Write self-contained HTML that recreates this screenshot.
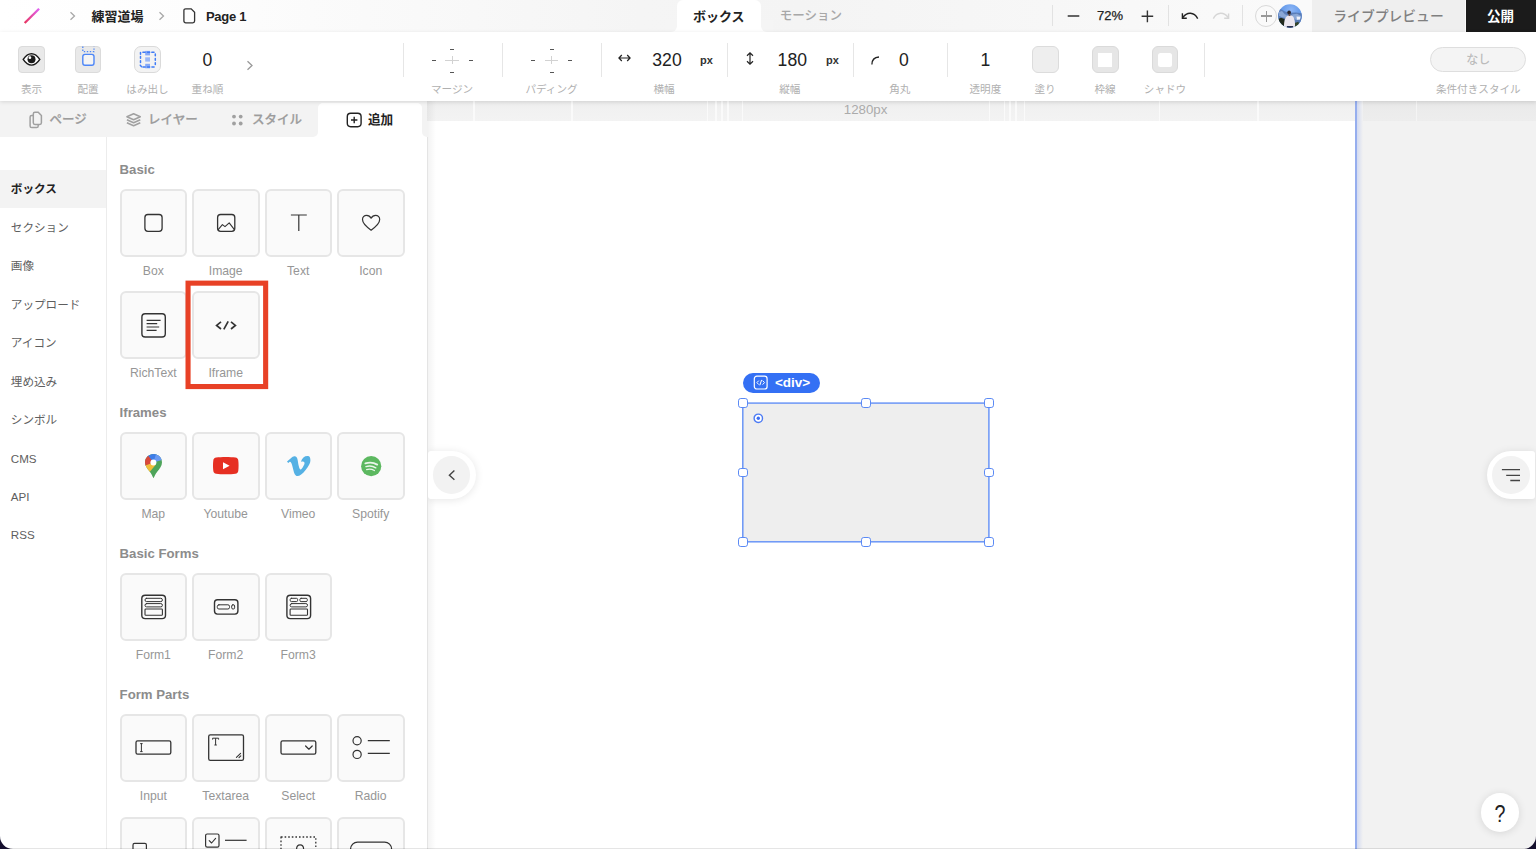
<!DOCTYPE html>
<html lang="ja">
<head>
<meta charset="utf-8">
<title>Editor</title>
<style>
*{box-sizing:border-box;margin:0;padding:0}
html,body{width:1536px;height:849px;overflow:hidden;background:#fff}
body{font-family:"Liberation Sans","Noto Sans CJK JP",sans-serif;color:#222;position:relative;font-size:13px}
.abs{position:absolute}
.t{position:absolute;white-space:nowrap;transform:translate(-50%,-50%);line-height:1}
.tl{position:absolute;white-space:nowrap;transform:translate(0,-50%);line-height:1}
svg{position:absolute;overflow:visible}
/* top bar */
#top{left:0;top:0;width:1536px;height:32px;background:linear-gradient(90deg,#fff 0,#fdfdfd 200px,#f5f5f5 640px,#f4f4f4 800px,#fafafa 1300px,#fafafa 100%)}
#tabbox{left:677px;top:0;width:84px;height:32px;background:#fff;border-radius:6px 6px 0 0}
.vsep{position:absolute;width:1px;background:#e2e2e2}
#live{left:1312px;top:0;width:153px;height:32px;background:#efefef}
#pub{left:1465.7px;top:0;width:70.3px;height:32px;background:#1b1b1b}
/* toolbar */
#tool{left:0;top:32px;width:1536px;height:69px;background:#fff;box-shadow:0 1px 4px rgba(0,0,0,.12);z-index:5}
.ib{position:absolute;width:26.6px;height:26.6px;top:14.2px;border-radius:4px;background:#e9e9e9;border:1px solid #dbdbdb}
.lab{position:absolute;white-space:nowrap;transform:translate(-50%,-50%);line-height:1;font-size:10.6px;color:#b0b0b0;top:56.5px}
.num{position:absolute;white-space:nowrap;transform:translate(-50%,-50%);line-height:1;font-size:17.6px;color:#222;top:28.6px}
.px{position:absolute;white-space:nowrap;transform:translate(-50%,-50%);line-height:1;font-size:11px;font-weight:bold;color:#333;top:28px}
.tsep{position:absolute;width:1px;background:#e6e6e6;top:10.8px;height:34px}
.dash{position:absolute;width:4px;height:1px;background:#555}
/* left */
#ltabs{left:0;top:101px;width:427px;height:36.4px;background:#f3f3f3}
#ltabact{left:318px;top:103px;width:104px;height:34px;background:#fff;border-radius:5px 5px 0 0}
#lnav{left:0;top:137px;width:106px;height:712px;background:#fff}
#lpanel{left:106px;top:137px;width:321px;height:712px;background:#fff;border-left:1px solid #ececec}
.nav{position:absolute;left:10.8px;white-space:nowrap;transform:translate(0,-50%);line-height:1;font-size:11.6px;color:#5e5e5e;margin-top:.9px}
.h{position:absolute;left:119.6px;white-space:nowrap;transform:translate(0,-50%);line-height:1;font-size:13.2px;font-weight:bold;color:#8c8c8c;margin-top:1.1px}
.card{position:absolute;width:67.8px;height:67.6px;border-radius:6px;background:#fafafa;border:2px solid #e6e6e6}
.cl{position:absolute;white-space:nowrap;transform:translate(-50%,-50%);line-height:1;font-size:12.2px;color:#969696;margin-top:.9px}
/* canvas */
#ruler{left:427px;top:101px;width:1109px;height:19.5px;background:linear-gradient(180deg,#ececec 0,#f1f1f1 40%,#f3f3f3 100%)}
#canvas{left:427px;top:120.5px;width:928px;height:729px;background:#fff}
#outside{left:1355px;top:120.5px;width:181px;height:729px;background:#f2f2f2}
</style>
</head>
<body>
<!-- ===== canvas area ===== -->
<div class="abs" id="ruler"></div>
<div class="abs" id="canvas"></div>
<div class="abs" id="outside"></div>
<div class="abs" style="left:473.15px;top:101px;width:1.5px;height:19.5px;background:#fafafa"></div><div class="abs" style="left:571.25px;top:101px;width:1.5px;height:19.5px;background:#fafafa"></div><div class="abs" style="left:706.75px;top:101px;width:1.5px;height:19.5px;background:#fafafa"></div><div class="abs" style="left:715.25px;top:101px;width:1.5px;height:19.5px;background:#fafafa"></div><div class="abs" style="left:721.45px;top:101px;width:1.5px;height:19.5px;background:#fafafa"></div><div class="abs" style="left:727.05px;top:101px;width:1.5px;height:19.5px;background:#fafafa"></div><div class="abs" style="left:741.75px;top:101px;width:1.5px;height:19.5px;background:#fafafa"></div><div class="abs" style="left:988.55px;top:101px;width:1.5px;height:19.5px;background:#fafafa"></div><div class="abs" style="left:1003.55px;top:101px;width:1.5px;height:19.5px;background:#fafafa"></div><div class="abs" style="left:1009.25px;top:101px;width:1.5px;height:19.5px;background:#fafafa"></div><div class="abs" style="left:1015.25px;top:101px;width:1.5px;height:19.5px;background:#fafafa"></div><div class="abs" style="left:1023.55px;top:101px;width:1.5px;height:19.5px;background:#fafafa"></div><div class="abs" style="left:1158.55px;top:101px;width:1.5px;height:19.5px;background:#fafafa"></div><div class="abs" style="left:1257.25px;top:101px;width:1.5px;height:19.5px;background:#fafafa"></div><div class="abs" style="left:1415.85px;top:101px;width:1.5px;height:19.5px;background:#fafafa"></div>
<div class="t" style="left:865.6px;top:109.8px;font-size:13.3px;color:#ababab">1280px</div>
<div class="abs" style="left:1357px;top:101px;width:179px;height:19.5px;background:rgba(0,0,0,.025)"></div>
<div class="abs" style="left:1356.6px;top:101px;width:6px;height:748px;background:linear-gradient(90deg,#d3daf0,#f2f2f2)"></div>
<div class="abs" style="left:1355.1px;top:101px;width:1.6px;height:748px;background:#96aeee"></div>
<div class="abs" style="left:427px;top:101px;width:9px;height:748px;background:linear-gradient(90deg,rgba(0,0,0,.05),rgba(0,0,0,0))"></div>
<svg style="left:0;top:0" width="1536" height="849"><rect x="742.8" y="403.1" width="246.1" height="138.7" fill="#eeeeee" stroke="#6b96f6" stroke-width="1.5"/></svg>
<div class="abs" style="left:738.0px;top:398.3px;width:9.6px;height:9.6px;background:#fff;border:1.4px solid #5b8af5;border-radius:2.8px"></div><div class="abs" style="left:861.1px;top:398.3px;width:9.6px;height:9.6px;background:#fff;border:1.4px solid #5b8af5;border-radius:2.8px"></div><div class="abs" style="left:984.1px;top:398.3px;width:9.6px;height:9.6px;background:#fff;border:1.4px solid #5b8af5;border-radius:2.8px"></div><div class="abs" style="left:738.0px;top:467.6px;width:9.6px;height:9.6px;background:#fff;border:1.4px solid #5b8af5;border-radius:2.8px"></div><div class="abs" style="left:984.1px;top:467.6px;width:9.6px;height:9.6px;background:#fff;border:1.4px solid #5b8af5;border-radius:2.8px"></div><div class="abs" style="left:738.0px;top:537.0px;width:9.6px;height:9.6px;background:#fff;border:1.4px solid #5b8af5;border-radius:2.8px"></div><div class="abs" style="left:861.1px;top:537.0px;width:9.6px;height:9.6px;background:#fff;border:1.4px solid #5b8af5;border-radius:2.8px"></div><div class="abs" style="left:984.1px;top:537.0px;width:9.6px;height:9.6px;background:#fff;border:1.4px solid #5b8af5;border-radius:2.8px"></div>
<svg style="left:752.1px;top:412.2px" width="13" height="13" fill="none"><circle cx="6.3" cy="6.3" r="4.2" fill="#fff" stroke="#4b7af4" stroke-width="1.4"/><circle cx="6.3" cy="6.3" r="1.7" fill="#3b6df3"/></svg>
<div class="abs" style="left:743px;top:372.8px;width:76.8px;height:20px;border-radius:10px;background:#3470f4"></div>
<svg style="left:753.4px;top:375.4px" width="16" height="16" fill="none" stroke="#fff"><rect x="1.300" y="1.200" width="12.800" height="12.800" rx="2.600" stroke-width="1.200"/><path d="M5.800 5.600 L3.900 7.600 L5.800 9.600 M9.600 5.600 L11.500 7.600 L9.600 9.600 M8.600 4.900 L6.800 10.300" stroke-width="1"/></svg>
<div class="tl" style="left:774.9px;top:383px;font-size:13.5px;font-weight:bold;color:#fff">&lt;div&gt;</div>
<div class="abs" style="left:428px;top:450.8px;width:47.8px;height:48.2px;background:#fff;border-radius:3px 24px 24px 3px;box-shadow:0 1px 8px rgba(0,0,0,.10)"></div>
<div class="abs" style="left:432.8px;top:456.3px;width:37.6px;height:37.6px;border-radius:50%;background:#f2f2f2"></div>
<svg style="left:447px;top:469px" width="10" height="12" fill="none" stroke="#444" stroke-width="1.4"><path d="M7.4 1.6 L2.4 6.2 L7.4 10.800"/></svg>
<div class="abs" style="left:1487px;top:450.8px;width:48.2px;height:48.2px;background:#fff;border-radius:24px 3px 3px 24px;box-shadow:0 1px 8px rgba(0,0,0,.10)"></div>
<div class="abs" style="left:1492.2px;top:456.3px;width:37.6px;height:37.6px;border-radius:50%;background:#f2f2f2"></div>
<svg style="left:1500px;top:467px" width="22" height="16" fill="none" stroke="#444" stroke-width="1.3"><path d="M1.9 2.700 H20 M6.200 8.300 H20 M10.300 13.500 H20"/></svg>
<div class="abs" style="left:1480.6px;top:793.3px;width:38.6px;height:38.8px;border-radius:50%;background:#fff;box-shadow:0 1px 8px rgba(0,0,0,.12)"></div>
<div class="t" style="left:1499.9px;top:813.7px;font-size:24px;color:#222;transform:translate(-50%,-50%) scaleX(.82)">?</div>

<!-- ===== left panel ===== -->
<div class="abs" id="ltabs"></div>
<div class="abs" id="ltabact"></div>
<div class="abs" id="lnav"></div>
<div class="abs" id="lpanel"></div>

<div class="abs" style="left:312px;top:132px;width:6px;height:5px;background:#fff"></div>
<div class="abs" style="left:307px;top:127px;width:11px;height:10px;background:#f3f3f3;border-radius:0 0 5px 0"></div>
<div class="abs" style="left:421.6px;top:132px;width:5.4px;height:5px;background:#fff"></div>
<div class="abs" style="left:421.6px;top:101px;width:5.4px;height:36px;background:#f3f3f3;border-radius:0 0 0 5px"></div>

<svg style="left:0;top:0" width="430" height="140" fill="none" stroke="#a0a0a0" stroke-width="1.5"><path d="M34.900 112.300 H38.200 L41.400 115.600 V122.800 Q41.400 124.400 39.800 124.400 H34.900 Q33.300 124.400 33.300 122.800 V113.900 Q33.300 112.300 34.900 112.300 Z"/><path d="M33.300 115.500 H31.700 Q30.100 115.500 30.100 117.100 V126 Q30.100 127.600 31.700 127.600 H36.600 Q38.200 127.600 38.200 126 V124.400"/></svg>
<div class="tl" style="left:49.5px;top:119.5px;font-size:12.5px;font-weight:500;color:#9c9c9c;-webkit-text-stroke:.25px #9c9c9c">ページ</div>
<svg style="left:0;top:0" width="430" height="140" fill="none" stroke="#a0a0a0" stroke-width="1.5" stroke-linejoin="round"><path d="M133.600 113.700 L140.300 116.700 L133.600 119.700 L126.900 116.700 Z"/><path d="M126.900 119.700 L133.600 122.700 L140.300 119.700"/><path d="M126.900 122.700 L133.600 125.700 L140.300 122.700"/></svg>
<div class="tl" style="left:148px;top:119.5px;font-size:12.5px;font-weight:500;color:#9c9c9c;-webkit-text-stroke:.25px #9c9c9c">レイヤー</div>
<svg style="left:231px;top:113px" width="13" height="14" fill="#a0a0a0"><circle cx="3" cy="3.6" r="1.9"/><circle cx="9.7" cy="3.6" r="1.9"/><circle cx="3" cy="10.5" r="1.9"/><circle cx="9.7" cy="10.5" r="1.9"/></svg>
<div class="tl" style="left:252px;top:119.5px;font-size:12.5px;font-weight:500;color:#9c9c9c;-webkit-text-stroke:.25px #9c9c9c">スタイル</div>
<svg style="left:346px;top:112px" width="17" height="16" fill="none" stroke="#222" stroke-width="1.4"><rect x="1.3" y="1.3" width="13.8" height="13.4" rx="3.4"/><path d="M8.2 4.8 V11.2 M5 8 H11.4"/></svg>
<div class="tl" style="left:368px;top:119.5px;font-size:12.6px;font-weight:bold;color:#222">追加</div>
<div class="abs" style="left:0;top:169.5px;width:106px;height:38.2px;background:#f3f3f3"></div>
<div class="nav" style="top:188.5px;font-weight:bold;color:#222;">ボックス</div>
<div class="nav" style="top:226.9px;">セクション</div>
<div class="nav" style="top:265.4px;">画像</div>
<div class="nav" style="top:303.9px;">アップロード</div>
<div class="nav" style="top:342.3px;">アイコン</div>
<div class="nav" style="top:380.8px;">埋め込み</div>
<div class="nav" style="top:419.2px;">シンボル</div>
<div class="nav" style="top:457.7px;">CMS</div>
<div class="nav" style="top:496.1px;">API</div>
<div class="nav" style="top:534.5px;">RSS</div>
<div class="h" style="top:169.3px">Basic</div>
<div class="h" style="top:412.3px">Iframes</div>
<div class="h" style="top:553px">Basic Forms</div>
<div class="h" style="top:694px">Form Parts</div>
<div class="card" style="left:119.7px;top:189.1px"></div><div class="cl" style="left:153.3px;top:270.2px">Box</div>
<div class="card" style="left:192.1px;top:189.1px"></div><div class="cl" style="left:225.7px;top:270.2px">Image</div>
<div class="card" style="left:264.6px;top:189.1px"></div><div class="cl" style="left:298.2px;top:270.2px">Text</div>
<div class="card" style="left:337.1px;top:189.1px"></div><div class="cl" style="left:370.7px;top:270.2px">Icon</div>
<div class="card" style="left:119.7px;top:291.4px"></div><div class="cl" style="left:153.3px;top:372.5px">RichText</div>
<div class="card" style="left:192.1px;top:291.4px"></div><div class="cl" style="left:225.7px;top:372.5px">Iframe</div>
<div class="card" style="left:119.7px;top:432.3px"></div><div class="cl" style="left:153.3px;top:513.4px">Map</div>
<div class="card" style="left:192.1px;top:432.3px"></div><div class="cl" style="left:225.7px;top:513.4px">Youtube</div>
<div class="card" style="left:264.6px;top:432.3px"></div><div class="cl" style="left:298.2px;top:513.4px">Vimeo</div>
<div class="card" style="left:337.1px;top:432.3px"></div><div class="cl" style="left:370.7px;top:513.4px">Spotify</div>
<div class="card" style="left:119.7px;top:573.1px"></div><div class="cl" style="left:153.3px;top:654.2px">Form1</div>
<div class="card" style="left:192.1px;top:573.1px"></div><div class="cl" style="left:225.7px;top:654.2px">Form2</div>
<div class="card" style="left:264.6px;top:573.1px"></div><div class="cl" style="left:298.2px;top:654.2px">Form3</div>
<div class="card" style="left:119.7px;top:714.2px"></div><div class="cl" style="left:153.3px;top:794.9px">Input</div>
<div class="card" style="left:192.1px;top:714.2px"></div><div class="cl" style="left:225.7px;top:794.9px">Textarea</div>
<div class="card" style="left:264.6px;top:714.2px"></div><div class="cl" style="left:298.2px;top:794.9px">Select</div>
<div class="card" style="left:337.1px;top:714.2px"></div><div class="cl" style="left:370.7px;top:794.9px">Radio</div>
<div class="card" style="left:119.7px;top:816.5px"></div>
<div class="card" style="left:192.1px;top:816.5px"></div>
<div class="card" style="left:264.6px;top:816.5px"></div>
<div class="card" style="left:337.1px;top:816.5px"></div>
<svg style="left:0;top:0" width="430" height="849" stroke="#333" stroke-width="1.3" fill="none" stroke-linecap="round" stroke-linejoin="round">
<rect x="144.9" y="214.5" width="17.2" height="16.8" rx="3"/>
<rect x="217.6" y="214.5" width="17.2" height="16.8" rx="3"/><path d="M218 229.8 L222.4 224.6 L225 226.6 L229.2 222.8 L234.4 229.6" stroke-width="1.1"/>
<path d="M290.9 215 H306.8 M298.8 215 V230.9" stroke-width="1.2" stroke-linecap="butt"/>
<path d="M371.1 230.2 C366 226.6 362.5 223.4 362.5 219.6 C362.5 217 364.4 215.3 366.6 215.3 C368.6 215.3 370.2 216.5 371.1 218.2 C372 216.5 373.6 215.3 375.6 215.3 C377.8 215.3 379.7 217 379.7 219.6 C379.7 223.4 376.2 226.6 371.1 230.2 Z" stroke-width="1.2"/>
<rect x="141.9" y="313.7" width="23.4" height="23.3" rx="3.2" stroke-width="1.4"/><path d="M146.6 320.4 H160.6 M146.6 323.7 H157.2 M146.6 327 H159.2 M146.6 330.3 H156.6" stroke-width="1.2" stroke-linecap="butt"/>
<path d="M221 321.8 L216.6 325.4 L221 329 M231 321.8 L235.4 325.4 L231 329 M228.2 321.4 L223.8 329.4" stroke-width="1.7" stroke-linecap="butt" stroke-linejoin="miter"/>
<rect x="141.8" y="595.2" width="23.7" height="23.4" rx="3.4" stroke-width="1.4"/><rect x="145.0" y="598.3" width="17.4" height="3.3" rx="1.6" stroke-width="1"/><rect x="145.0" y="603.6" width="17.4" height="3.3" rx="1.6" stroke-width="1"/><rect x="145.0" y="609" width="17.4" height="6.3" rx="0.8" stroke-width="1.1"/>
<rect x="214.5" y="599.7" width="23.4" height="14.4" rx="3" stroke-width="1.4"/><rect x="217.3" y="604.8" width="12.2" height="4.2" rx="1.6" stroke-width="1"/><rect x="231.7" y="604.8" width="2.9" height="4.2" rx="1.2" stroke-width="1"/>
<rect x="286.9" y="595.2" width="23.7" height="23.4" rx="3.4" stroke-width="1.4"/><rect x="290.2" y="598.3" width="7.4" height="3.3" rx="1.2" stroke-width="1"/><rect x="299.9" y="598.3" width="7.4" height="3.3" rx="1.2" stroke-width="1"/><rect x="290.1" y="603.6" width="17.4" height="3.3" rx="1.6" stroke-width="1"/><rect x="290.1" y="609" width="17.4" height="6.3" rx="0.8" stroke-width="1.1"/>
<rect x="136" y="740.9" width="34.8" height="13.2" rx="1.6" stroke-width="1.3"/><path d="M141.4 743.6 V751.6 M140.2 743.6 H142.6 M140.2 751.6 H142.6" stroke-width="1" stroke-linecap="butt"/>
<rect x="208.7" y="734.8" width="34.8" height="25.6" rx="1.6" stroke-width="1.3"/><path d="M212.6 738.2 H218.6 M215.6 738.2 V745 M214.4 745 H216.8 M212.6 738.2 V739.6 M218.6 738.2 V739.6" stroke-width="1" stroke-linecap="butt"/><path d="M236.4 757.4 L240.6 753.4 M239 757.6 L240.8 755.8" stroke-width="1.1"/>
<rect x="281" y="740.9" width="34.8" height="13.2" rx="1.6" stroke-width="1.3"/><path d="M305.6 746 L308.9 749.2 L312.2 746" stroke-width="1.2"/>
<circle cx="357.1" cy="740.7" r="4.1" stroke-width="1.2"/><circle cx="357.1" cy="754.4" r="4.1" stroke-width="1.2"/><path d="M367.8 740.7 H389.8 M367.8 753.4 H389.8" stroke-width="1.2" stroke-linecap="butt"/>
<rect x="133" y="843.4" width="13.4" height="10" rx="1.5" stroke-width="1.2"/>
<rect x="205.6" y="834" width="13.4" height="13.2" rx="1.6" stroke-width="1.2"/><path d="M209.2 840.6 L211.6 843 L215.6 838.4" stroke-width="1.1"/><path d="M225 840.3 H246.6" stroke-width="1.2" stroke-linecap="butt"/>
<rect x="281" y="837" width="34.8" height="20" stroke-width="1.3" stroke-dasharray="1.6 2" stroke-linecap="butt"/><path d="M296.6 849 C296.6 843.4 303.6 843.4 303.6 849" stroke-width="1.2"/>
<rect x="350.6" y="842.1" width="41" height="16" rx="7" stroke-width="1.3"/>
</svg>
<svg style="left:145.2px;top:453.7px" width="17" height="24.2" viewBox="0 0 17 24.2"><defs><clipPath id="pin"><path d="M8.5 0 C13.2 0 17 3.7 17 8.4 C17 12.2 14.6 14.6 12.4 17.4 C10.4 20 9.6 22 8.5 24.2 C7.4 22 6.6 20 4.6 17.4 C2.4 14.6 0 12.2 0 8.4 C0 3.7 3.8 0 8.5 0 Z"/></clipPath></defs><g clip-path="url(#pin)"><rect width="17" height="24.2" fill="#4ea45a"/><path d="M0 0 H17 V4 L8.5 8.4 L2 2.6 Z" fill="#3e7de8"/><path d="M11 0 H17 V6 L8.5 8.4 Z" fill="#6a9af2"/><path d="M0 0 L3 1.6 L8.5 8.4 L1 12 L0 12 Z" fill="#d9483b"/><path d="M0.4 11.6 L8.5 8.4 L11 10.6 L4.6 18 L0 14 Z" fill="#f2bd3a"/></g><circle cx="8.4" cy="8.5" r="3" fill="#fff"/></svg>
<svg style="left:213.2px;top:457.4px" width="25.6" height="17.4" viewBox="0 0 25.6 17.4"><path d="M3.2 0.6 C8 -0.1 17.6 -0.1 22.4 0.6 C24.2 0.9 25.1 1.9 25.3 3.6 C25.7 6.6 25.7 10.8 25.3 13.8 C25.1 15.5 24.2 16.5 22.4 16.8 C17.6 17.5 8 17.5 3.2 16.8 C1.4 16.5 0.5 15.5 0.3 13.8 C-0.1 10.8 -0.1 6.6 0.3 3.6 C0.5 1.9 1.4 0.9 3.2 0.6 Z" fill="#e62f22"/><path d="M10 5.2 L16.6 8.7 L10 12.2 Z" fill="#fff"/></svg>
<svg style="left:286.5px;top:455.9px" width="23.5" height="20.1" viewBox="0 0 23.5 20.1"><path d="M23.4 4.7 C23.3 7 21.7 10.1 18.6 14.1 C15.4 18.2 12.7 20.1 10.5 20.1 C9.1 20.1 8 18.9 7 16.4 C6.4 14.1 5.8 11.8 5.2 9.5 C4.5 7 3.8 5.8 3 5.8 C2.8 5.8 2.2 6.2 1.2 6.9 L0 5.6 C1.2 4.6 2.4 3.5 3.6 2.5 C5.2 1.1 6.4 0.4 7.2 0.3 C9.1 0.1 10.3 1.4 10.7 4.2 C11.2 7.2 11.5 9.1 11.7 9.8 C12.3 12.3 12.9 13.6 13.5 13.6 C14 13.6 14.8 12.8 15.8 11.2 C16.8 9.6 17.4 8.4 17.5 7.5 C17.6 6.1 17.1 5.4 15.8 5.4 C15.2 5.4 14.6 5.5 13.9 5.8 C15.2 1.8 17.5 -0.2 20.9 0 C22.700 0.1 23.5 1.600 23.4 4.7 Z" fill="#55b1e4"/></svg>
<svg style="left:361px;top:455.8px" width="20.4" height="20.4" viewBox="0 0 20.4 20.4"><circle cx="10.2" cy="10.2" r="10.1" fill="#5cb860"/><g fill="none" stroke="#eaf6ea" stroke-linecap="round"><path d="M4.4 7.4 C8.4 6.2 12.8 6.6 16.2 8.6" stroke-width="1.9"/><path d="M5 10.6 C8.4 9.6 11.8 10 14.8 11.8" stroke-width="1.5"/><path d="M5.6 13.6 C8.2 12.9 11 13.200 13.400 14.600" stroke-width="1.2"/></g></svg>

<svg style="left:0;top:0" width="430" height="849"><rect x="188.05" y="283.15" width="77.6" height="103.4" fill="none" stroke="#e84126" stroke-width="5.1"/></svg>
<div class="abs" style="left:426.6px;top:137px;width:1px;height:712px;background:#e4e4e4"></div>

<!-- ===== top bar ===== -->
<div class="abs" id="top"></div>

<div class="abs" style="left:671px;top:26px;width:96px;height:6px;background:#fff"></div>
<div class="abs" style="left:665px;top:20px;width:12px;height:12px;background:#f5f5f5;border-radius:0 0 6px 0"></div>
<div class="abs" style="left:761px;top:20px;width:12px;height:12px;background:#f5f5f5;border-radius:0 0 0 6px"></div>
<div class="abs" id="tabbox"></div>
<svg style="left:0;top:0" width="60" height="32"><defs><linearGradient id="lg" x1="0" y1="1" x2="1" y2="0"><stop offset="0" stop-color="#e8345f"/><stop offset="1" stop-color="#df62f2"/></linearGradient></defs><line x1="24.700" y1="23" x2="39.100" y2="8.800" stroke="url(#lg)" stroke-width="2.300"/></svg>
<svg style="left:69px;top:11px" width="8" height="10" fill="none" stroke="#a8a8a8" stroke-width="1.3"><path d="M1.5 1.2 L5.5 5 L1.5 8.8"/></svg>
<div class="tl" style="left:91.5px;top:16px;font-size:13px;font-weight:bold;color:#222">練習道場</div>
<svg style="left:158px;top:11px" width="8" height="10" fill="none" stroke="#a8a8a8" stroke-width="1.3"><path d="M1.5 1.2 L5.5 5 L1.5 8.8"/></svg>
<svg style="left:183px;top:8px" width="13" height="16" fill="none" stroke="#333" stroke-width="1.3"><path d="M2.7 0.8 H8.2 L11.6 4.2 V13 a1.8 1.8 0 0 1 -1.8 1.8 H2.7 a1.8 1.8 0 0 1 -1.8 -1.8 V2.6 a1.8 1.8 0 0 1 1.8 -1.8 Z"/></svg>
<div class="tl" style="left:206px;top:15.9px;font-size:13px;letter-spacing:-.3px;font-weight:bold;color:#222">Page 1</div>
<div class="t" style="left:718.8px;top:16px;font-size:13px;font-weight:bold;color:#222">ボックス</div>
<div class="t" style="left:811px;top:16px;font-size:12.5px;font-weight:500;color:#a8a8a8">モーション</div>
<div class="vsep" style="left:1052px;top:5px;height:21px"></div>

<div class="t" style="left:1110px;top:15.4px;font-size:13px;color:#222;-webkit-text-stroke:.25px #222">72%</div>


<svg style="left:0;top:0" width="1536" height="32" fill="none" stroke="#333" stroke-width="1.4"><path d="M1067.700 16 H1079.300 M1141.600 16.300 H1153.200 M1147.400 10.400 V22.200"/></svg>
<div class="vsep" style="left:1168px;top:5px;height:21px"></div>
<svg style="left:0;top:0" width="1536" height="32" fill="none" stroke="#222" stroke-width="1.4"><path d="M1182.4 13.2 V18.2 H1186.8"/><path d="M1182.8 17.6 C1187 11.6 1194 11.800 1197.700 18.600"/></svg>
<svg style="left:0;top:0" width="1536" height="32" fill="none" stroke="#d6d6d6" stroke-width="1.4"><path d="M1228.600 13.400 V18.200 H1224.200"/><path d="M1228.200 17.600 C1224 11.600 1217 11.800 1213.300 18.600"/></svg>
<div class="vsep" style="left:1242px;top:5px;height:21px"></div>
<div class="abs" style="left:1255px;top:5px;width:22px;height:22px;border-radius:50%;border:1px solid #d9d9d9;background:#fafafa"></div>
<div class="abs" style="left:1260.8px;top:15.4px;width:11px;height:1.2px;background:#999"></div>
<div class="abs" style="left:1265.7px;top:10.5px;width:1.2px;height:11px;background:#999"></div>
<svg style="left:1277.6px;top:3.9px" width="24" height="24" viewBox="0 0 24 24"><defs><clipPath id="av"><circle cx="12" cy="12" r="11.8"/></clipPath><radialGradient id="sky" cx=".55" cy=".25" r=".6"><stop offset="0" stop-color="#8db6f6"/><stop offset="1" stop-color="#4f8be3"/></radialGradient><filter id="bl" x="-20%" y="-20%" width="140%" height="140%"><feGaussianBlur stdDeviation=".6"/></filter></defs><g clip-path="url(#av)"><rect width="24" height="24" fill="url(#sky)"/><g filter="url(#bl)"><path d="M-2 5.500 L3 5.200 L7 7.500 L12 8.800 L18 8.400 L26 9.600 V26 H-2Z" fill="#5a7db8"/><path d="M1 8 L4 7 L7 10.500 L4 13 L1 12Z M14 10.500 L19 9.800 L23 12 L22 15.500 L18 16 L15 13.500Z M3 9 L9 11 L8 14 L3 13Z" fill="#8aa7d6"/><path d="M18.500 12.500 L22.500 12.700 L22 15.500 L19 15.700Z" fill="#eef2fb"/><path d="M-1 15.500 L3 13.800 L6.500 15 L8.500 25 H-1Z" fill="#222b1d"/><path d="M15 25 L16.500 19 L20.500 17.800 L22 25Z" fill="#34452b"/><path d="M6 23 C5.800 17.500 7.200 13 9.600 11.600 L14 11.600 C16.200 13 17.400 17.500 16.900 23 Z" fill="#ece7ef"/><rect x="8.800" y="22" width="6.400" height="3" fill="#2a3350"/><ellipse cx="11.100" cy="8.500" rx="1.800" ry="2.100" fill="#2a2328"/><rect x="10.600" y="9.800" width="1.700" height="2.200" fill="#6a5048"/></g></g></svg>
<div class="abs" id="live"></div>
<div class="t" style="left:1388.5px;top:16.5px;font-size:13.8px;font-weight:500;color:#808080">ライブプレビュー</div>
<div class="abs" id="pub"></div>
<div class="t" style="left:1500.5px;top:16.5px;font-size:13.5px;font-weight:bold;color:#fff">公開</div>

<!-- ===== toolbar ===== -->
<div class="abs" id="tool">

<div class="ib" style="left:18px"></div>
<svg style="left:18px;top:14.2px" width="27" height="27" viewBox="0 0 27 27"><path d="M5.200 13.400 C7.800 9.400 10.600 7.700 13.500 7.700 C16.400 7.700 19.200 9.400 21.800 13.400 C19.200 17.400 16.400 19.100 13.500 19.100 C10.600 19.100 7.800 17.400 5.200 13.400 Z" fill="#fff" stroke="#1a1a1a" stroke-width="1.4"/><circle cx="13.500" cy="13.300" r="4" fill="#1a1a1a"/><circle cx="11.900" cy="11.700" r="1.400" fill="#fff"/></svg>
<div class="ib" style="left:74.5px"></div>
<svg style="left:74.5px;top:14px" width="27" height="27" viewBox="0 0 27 27" fill="none"><path d="M7.8 0.6 V5.6 H19 V0.6" stroke="#4d86f7" stroke-width="1.3" stroke-dasharray="1.4 1.6"/><rect x="7.800" y="8.400" width="11.200" height="10.800" rx="2.200" fill="#f4f4f4" stroke="#4d86f7" stroke-width="1.400"/></svg>
<div class="ib" style="left:134.3px;border-radius:7px;background:#f3f3f3;border:1.3px solid #dadada"></div>
<svg style="left:134px;top:14.2px" width="27" height="27" viewBox="0 0 27 27" fill="none"><rect x="11.2" y="4.900" width="4.800" height="4.500" fill="#86a9f7"/><rect x="11.2" y="11.300" width="4.800" height="4.300" fill="#9ab7f8"/><rect x="11.2" y="17.800" width="4.800" height="4.500" fill="#86a9f7"/><path d="M6.500 6.4 V8.2 M6.500 10.5 V12.3 M6.500 14.8 V16.6 M6.300 19.200 L7.400 20.600 M8.9 6.200 H11.1 M13.5 6.200 H15.7 M17.8 6.200 H20.0 M21.300 7.9 V9.7 M21.300 12.4 V14.2 M21.300 16.7 V18.5 M8.9 21 H11.1 M13.5 21 H15.7 M17.9 21 H20.1" stroke="#3f7bf6" stroke-width="1.500" stroke-linecap="round"/></svg>
<div class="lab" style="left:31.5px">表示</div>
<div class="lab" style="left:88px">配置</div>
<div class="lab" style="left:147.5px">はみ出し</div>
<div class="lab" style="left:207.5px">重ね順</div>
<div class="lab" style="left:452px">マージン</div>
<div class="lab" style="left:551.5px">パディング</div>
<div class="lab" style="left:664px">横幅</div>
<div class="lab" style="left:789.8px">縦幅</div>
<div class="lab" style="left:899.8px">角丸</div>
<div class="lab" style="left:985.4px">透明度</div>
<div class="lab" style="left:1045px">塗り</div>
<div class="lab" style="left:1105px">枠線</div>
<div class="lab" style="left:1165px">シャドウ</div>
<div class="lab" style="left:1478.3px">条件付きスタイル</div>
<div class="num" style="left:207.5px">0</div>
<svg style="left:246px;top:27.8px" width="8" height="11" fill="none" stroke="#999" stroke-width="1.3"><path d="M1.5 1.2 L6 5.5 L1.5 9.8"/></svg>
<div class="tsep" style="left:403px"></div>
<div class="tsep" style="left:502px"></div>
<div class="tsep" style="left:601px"></div>
<div class="tsep" style="left:727px"></div>
<div class="tsep" style="left:853px"></div>
<div class="tsep" style="left:947px"></div>
<div class="tsep" style="left:1204px"></div>
<div class="dash" style="left:450.1px;top:16.7px"></div><div class="dash" style="left:450.1px;top:39.5px"></div><div class="dash" style="left:431.8px;top:27.7px"></div><div class="dash" style="left:468.8px;top:27.7px"></div><div class="abs" style="left:445.4px;top:27.6px;width:13.4px;height:1px;background:#d2d2d2"></div><div class="abs" style="left:451.6px;top:23.8px;width:1px;height:8.4px;background:#d2d2d2"></div>
<div class="dash" style="left:549.6px;top:16.7px"></div><div class="dash" style="left:549.6px;top:39.5px"></div><div class="dash" style="left:531.3px;top:27.7px"></div><div class="dash" style="left:568.3px;top:27.7px"></div><div class="abs" style="left:544.9px;top:27.6px;width:13.4px;height:1px;background:#d2d2d2"></div><div class="abs" style="left:551.1px;top:23.8px;width:1px;height:8.4px;background:#d2d2d2"></div>

<svg style="left:617.5px;top:21px" width="13" height="10" fill="none" stroke="#222" stroke-width="1.2"><path d="M1 5 H12 M3.8 2 L0.9 5 L3.8 8 M9.2 2 L12.1 5 L9.2 8"/></svg>
<div class="num" style="left:667px">320</div>
<div class="px" style="left:706.5px;top:27.8px">px</div>
<svg style="left:744.5px;top:20px" width="10" height="13" fill="none" stroke="#222" stroke-width="1.2"><path d="M5 1 V12 M2 3.8 L5 0.9 L8 3.8 M2 9.2 L5 12.1 L8 9.2"/></svg>
<div class="num" style="left:792.3px">180</div>
<div class="px" style="left:832.5px;top:27.8px">px</div>
<svg style="left:871px;top:24px" width="9" height="9" fill="none" stroke="#222" stroke-width="1.3"><path d="M0.9 8.6 C0.9 4 3.6 1.2 8 1"/></svg>
<div class="num" style="left:903.8px">0</div>
<div class="num" style="left:985.4px">1</div>
<div class="ib" style="left:1032px;border-radius:6px;background:#eeeeee;border-color:#dcdcdc"></div>
<div class="ib" style="left:1092px;border-radius:6px;background:#e6e6e6;border-color:#dadada"></div>
<div class="abs" style="left:1098px;top:20.5px;width:14.4px;height:14.4px;background:#fff"></div>
<div class="ib" style="left:1151.5px;border-radius:6px;background:#e6e6e6;border-color:#dadada"></div>
<div class="abs" style="left:1158px;top:20.5px;width:14px;height:14px;background:#fff;border-radius:2.5px"></div>
<div class="abs" style="left:1430px;top:15.4px;width:96.2px;height:24.6px;border-radius:13px;background:#f4f4f4;border:1px solid #dedede"></div>
<div class="t" style="left:1478.3px;top:27.5px;font-size:12px;font-weight:500;color:#bcbcbc">なし</div>

</div>
<div class="abs" style="left:0;top:848.3px;width:1536px;height:0.7px;background:rgba(0,0,0,.10);z-index:9"></div>
<svg style="z-index:10;left:0;top:836px" width="13" height="13"><path d="M0 0 V13 H13 A13 13 0 0 1 0 0 Z" fill="#15102e"/></svg>
<svg style="z-index:10;left:1523px;top:836px" width="13" height="13"><path d="M13 0 V13 H0 A13 13 0 0 0 13 0 Z" fill="#15102e"/></svg>
<!--OVER-->
</body>
</html>
